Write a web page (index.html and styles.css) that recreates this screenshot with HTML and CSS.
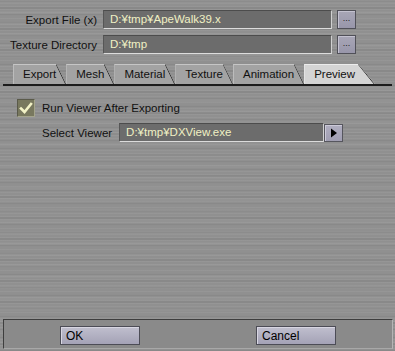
FILE: index.html
```html
<!DOCTYPE html>
<html>
<head>
<meta charset="utf-8">
<link rel="stylesheet" href="styles.css">
</head>
<body>
<div class="window">
  <div class="paths">
    <div class="row">
      <span class="lbl">Export File (x)</span>
      <div class="field">D:¥tmp¥ApeWalk39.x</div>
      <button class="browse">...</button>
    </div>
    <div class="row">
      <span class="lbl">Texture Directory</span>
      <div class="field">D:¥tmp</div>
      <button class="browse">...</button>
    </div>
  </div>
  <div class="tabs">
    <div class="tab">Export</div>
    <div class="tab">Mesh</div>
    <div class="tab">Material</div>
    <div class="tab">Texture</div>
    <div class="tab">Animation</div>
    <div class="tab active">Preview</div>
  </div>
  <div class="panel">
    <div class="check-row">
      <span class="checkbox">
        <svg width="18" height="18" viewBox="0 0 18 18"><path d="M4 9.5 L7.5 13 L14 5" fill="none" stroke="#f2f2c6" stroke-width="2.6" stroke-linecap="square"/></svg>
      </span>
      <span class="check-label">Run Viewer After Exporting</span>
    </div>
    <div class="viewer-row">
      <span class="viewer-label">Select Viewer</span>
      <div class="field viewer-field">D:¥tmp¥DXView.exe</div>
      <button class="arrow">
        <svg width="8" height="10" viewBox="0 0 8 10"><path d="M1 0.5 L7 5 L1 9.5 Z" fill="#000"/></svg>
      </button>
    </div>
  </div>
  <div class="footer">
    <button class="btn">OK</button>
    <button class="btn">Cancel</button>
  </div>
</div>
</body>
</html>
```
FILE: styles.css
```css
html, body {
  margin: 0;
  padding: 0;
}
body {
  font: 11.5px "Liberation Sans", Arial, sans-serif;
  color: #111;
}
.window {
  width: 395px;
  height: 351px;
  display: flex;
  flex-direction: column;
  background:
    repeating-linear-gradient(180deg, rgba(255,255,255,0.05) 0 1px, transparent 1px 3px),
    repeating-linear-gradient(180deg, rgba(0,0,0,0.05) 0 2px, transparent 2px 7px),
    repeating-linear-gradient(180deg, rgba(255,255,255,0.03) 0 3px, transparent 3px 11px),
    #909090;
}
.paths {
  padding-top: 10px;
  display: flex;
  flex-direction: column;
  gap: 6px;
}
.row {
  display: flex;
  align-items: center;
  height: 19px;
}
.lbl {
  width: 97px;
  text-align: right;
  margin-right: 6px;
  white-space: nowrap;
}
.field {
  box-sizing: border-box;
  width: 229px;
  height: 19px;
  line-height: 17px;
  padding-left: 6px;
  background: #6c6c6c;
  color: #f0f0c4;
  border-top: 1px solid #4c4c4c;
  border-left: 1px solid #565656;
  border-bottom: 1px solid #dcdcdc;
  border-right: 1px solid #d0d0d0;
  white-space: nowrap;
}
.browse {
  box-sizing: border-box;
  width: 19px;
  height: 19px;
  margin-left: 5px;
  padding: 0 0 3px;
  font: 9px "Liberation Sans", Arial, sans-serif;
  line-height: 14px;
  color: #222;
  background: linear-gradient(#a8a6b6, #9896aa);
  border: 1px solid #505058;
  box-shadow: inset 1px 1px 0 #c4c2d0;
}
.tabs {
  margin: 10px 3px 0 3px;
  padding-left: 10px;
  height: 20px;
  display: flex;
  border-bottom: 2px solid #1c1c1c;
}
.tab {
  position: relative;
  height: 20px;
  box-sizing: border-box;
  line-height: 19px;
  padding: 0 10px 0 9px;
  background: #a3a3a3;
  border-top: 1px solid #c6c6c6;
  border-left: 1px solid #bcbcbc;
  clip-path: polygon(0 0, calc(100% - 10px) 0, 100% 100%, 0 100%);
  white-space: nowrap;
}
.tab::after {
  content: "";
  position: absolute;
  top: -1px;
  right: 0;
  width: 10px;
  height: 21px;
  background: linear-gradient(to top right, transparent calc(50% - 0.8px), #333 50%, transparent calc(50% + 0.8px));
}
.tab.active {
  background: #d4d4d4;
  border-top-color: #ececec;
  border-left-color: #e6e6e6;
  padding-right: 20px;
  clip-path: polygon(0 0, calc(100% - 17px) 0, 100% 100%, 0 100%);
}
.tab.active::after {
  width: 17px;
}
.panel {
  flex: 1;
  padding: 13px 0 0 17px;
}
.check-row {
  display: flex;
  align-items: center;
  height: 18px;
}
.checkbox {
  box-sizing: border-box;
  width: 18px;
  height: 18px;
  display: flex;
  background: #78785e;
  border-top: 1px solid #5a5a4a;
  border-left: 1px solid #5a5a4a;
  border-bottom: 1px solid #a4a48c;
  border-right: 1px solid #a4a48c;
  margin-right: 7px;
}
.checkbox svg {
  margin: -1px;
}
.viewer-row {
  display: flex;
  align-items: center;
  margin-top: 6px;
  padding-left: 25px;
  height: 19px;
}
.viewer-label {
  margin-right: 7px;
  white-space: nowrap;
}
.viewer-field {
  width: 205px;
}
.arrow {
  box-sizing: border-box;
  width: 19px;
  height: 18px;
  margin-top: 1px;
  padding: 0;
  display: flex;
  align-items: center;
  justify-content: center;
  background: linear-gradient(#b0aec0, #a09eb2);
  border: 1px solid #56565e;
  box-shadow: inset 1px 1px 0 #cccad8;
}
.footer {
  box-sizing: border-box;
  height: 30px;
  margin: 0 2px 2px 3px;
  padding: 6px 0 0 56px;
  display: flex;
  gap: 116px;
  align-items: flex-start;
  background: #8a8a8a;
  border-top: 1px solid #3e3e3e;
  border-left: 1px solid #3e3e3e;
  border-right: 1px solid #b4b4b4;
  border-bottom: 1px solid #a8a8a8;
}
.btn {
  box-sizing: border-box;
  width: 80px;
  height: 19px;
  padding: 0 0 0 5px;
  text-align: left;
  font: 12px "Liberation Sans", Arial, sans-serif;
  color: #000;
  background: linear-gradient(#c0bfce, #a4a2b6);
  border: 1px solid #4c4c56;
  box-shadow: inset 1px 1px 0 #d8d6e2;
}
```
